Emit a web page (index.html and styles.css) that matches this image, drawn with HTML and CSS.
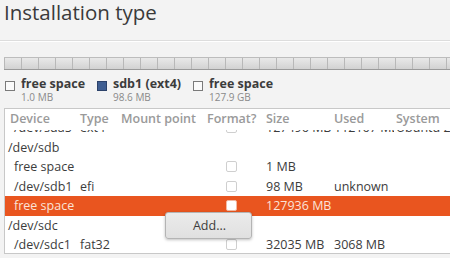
FILE: index.html
```html
<!DOCTYPE html>
<html>
<head>
<meta charset="utf-8">
<link rel="stylesheet" href="styles.css">
</head>
<body>
<div class="page">
  <h1 class="title">Installation type</h1>
  <div class="sep"></div>
  <div class="bar"></div>
  <div class="legend">
    <div class="leg">
      <span class="sw sw-free"></span>
      <div class="leg-text"><div class="leg-name">free space</div><div class="leg-size">1.0 MB</div></div>
    </div>
    <div class="leg">
      <span class="sw sw-ext4"></span>
      <div class="leg-text"><div class="leg-name">sdb1 (ext4)</div><div class="leg-size">98.6 MB</div></div>
    </div>
    <div class="leg">
      <span class="sw sw-free"></span>
      <div class="leg-text"><div class="leg-name">free space</div><div class="leg-size">127.9 GB</div></div>
    </div>
  </div>
  <div class="table">
    <div class="row head">
      <div class="c c1">Device</div>
      <div class="c">Type</div>
      <div class="c">Mount point</div>
      <div class="c">Format?</div>
      <div class="c">Size</div>
      <div class="c">Used</div>
      <div class="c">System</div>
    </div>
    <div class="body">
      <div class="rows">
        <div class="row">
          <div class="c l1">/dev/sda5</div><div class="c">ext4</div><div class="c"></div>
          <div class="c"><span class="cb"></span></div><div class="c">127496 MB</div><div class="c">112167 MB</div><div class="c">Ubuntu 20.04</div>
        </div>
        <div class="row">
          <div class="c l0">/dev/sdb</div><div class="c"></div><div class="c"></div>
          <div class="c"></div><div class="c"></div><div class="c"></div><div class="c"></div>
        </div>
        <div class="row">
          <div class="c l1">free space</div><div class="c"></div><div class="c"></div>
          <div class="c"><span class="cb"></span></div><div class="c">1 MB</div><div class="c"></div><div class="c"></div>
        </div>
        <div class="row">
          <div class="c l1">/dev/sdb1</div><div class="c">efi</div><div class="c"></div>
          <div class="c"><span class="cb"></span></div><div class="c">98 MB</div><div class="c">unknown</div><div class="c"></div>
        </div>
        <div class="row sel">
          <div class="c l1">free space</div><div class="c"></div><div class="c"></div>
          <div class="c"><span class="cb"></span></div><div class="c">127936 MB</div><div class="c"></div><div class="c"></div>
        </div>
        <div class="row">
          <div class="c l0">/dev/sdc</div><div class="c"></div><div class="c"></div>
          <div class="c"></div><div class="c"></div><div class="c"></div><div class="c"></div>
        </div>
        <div class="row">
          <div class="c l1">/dev/sdc1</div><div class="c">fat32</div><div class="c"></div>
          <div class="c"><span class="cb"></span></div><div class="c">32035 MB</div><div class="c">3068 MB</div><div class="c"></div>
        </div>
      </div>
    </div>
  </div>
  <div class="menu"><span class="menu-item">Add...</span></div>
</div>
</body>
</html>
```
FILE: styles.css
```css
html, body {
  margin: 0;
  padding: 0;
  background: #f3f3f3;
  overflow: hidden;
}
.page {
  position: relative;
  width: 450px;
  height: 258px;
  overflow: hidden;
  font-family: "Open Sans", "Noto Sans", sans-serif;
  color: #3c3c3c;
}
.title {
  margin: 0;
  padding: 0 0 0 4px;
  height: 40px;
  font-size: 20.5px;
  font-weight: normal;
  line-height: 25px;
  color: #3a3a3a;
}
.sep {
  height: 1px;
  background: #dddddd;
  border-bottom: 1px solid #ffffff;
}
.bar {
  margin: 15px 0 0 4px;
  height: 11px;
  border-top: 1px solid #bdbdbd;
  border-bottom: 1px solid #9a9a9a;
  background:
    repeating-linear-gradient(90deg, #b8b8b8 0, #b8b8b8 1px, transparent 1px, transparent 17px),
    linear-gradient(#e9e9e9, #d2d2d2);
}
.legend {
  display: flex;
  padding: 5px 0 0 5px;
  height: 38px;
  box-sizing: border-box;
}
.leg {
  display: flex;
  align-items: flex-start;
}
.leg:nth-child(1) { width: 92px; }
.leg:nth-child(2) { width: 96px; }
.sw {
  width: 8px;
  height: 8px;
  margin-top: 6px;
  margin-right: 6px;
  border: 1px solid #7a7a7a;
  background: #fafafa;
  flex: none;
}
.sw-ext4 {
  background: #3f5e91;
  border-color: #2c426a;
}
.leg-name {
  font-size: 12.5px;
  font-weight: bold;
  line-height: 17px;
  color: #3c3c3c;
}
.leg-size {
  font-size: 10px;
  line-height: 11px;
  color: #8a8a8a;
}
.table {
  margin-left: 4px;
  width: 470px;
  background: #ffffff;
  border: 1px solid #c8c8c8;
  font-size: 12.5px;
}
.row {
  display: grid;
  grid-template-columns: 73px 41px 86px 59px 68px 62px 1fr;
  height: 19.6px;
  align-items: center;
  white-space: nowrap;
}
.c {
  padding-left: 2px;
  overflow: hidden;
}
.head {
  height: 21px;
  box-sizing: border-box;
  padding-bottom: 3px;
  color: #9a9a9a;
  font-weight: 600;
  position: relative;
  z-index: 1;
  background: #ffffff;
}
.head .c1 { padding-left: 5px; }
.body {
  height: 123px;
  overflow: hidden;
}
.rows {
  margin-top: -12.4px;
}
.l0 { padding-left: 3px; }
.l1 { padding-left: 9px; }
.cb {
  display: block;
  margin-left: 19px;
  width: 9px;
  height: 9px;
  border: 1px solid #cfcfcf;
  border-radius: 2px;
  background: #ffffff;
}
.sel {
  background: #e9551f;
  color: #fbe3d8;
}
.sel .cb {
  border-color: #f2b9a2;
}
.menu {
  position: absolute;
  left: 165px;
  top: 212px;
  width: 85px;
  height: 25px;
  border: 1px solid #b4b4b4;
  border-radius: 3px;
  background: linear-gradient(#ebebeb, #e0e0e0);
  box-shadow: 0 1px 3px rgba(0,0,0,0.25);
  display: flex;
  align-items: center;
  justify-content: center;
}
.menu-item {
  font-size: 12.5px;
  color: #3c3c3c;
  padding-left: 2px;
}
```
